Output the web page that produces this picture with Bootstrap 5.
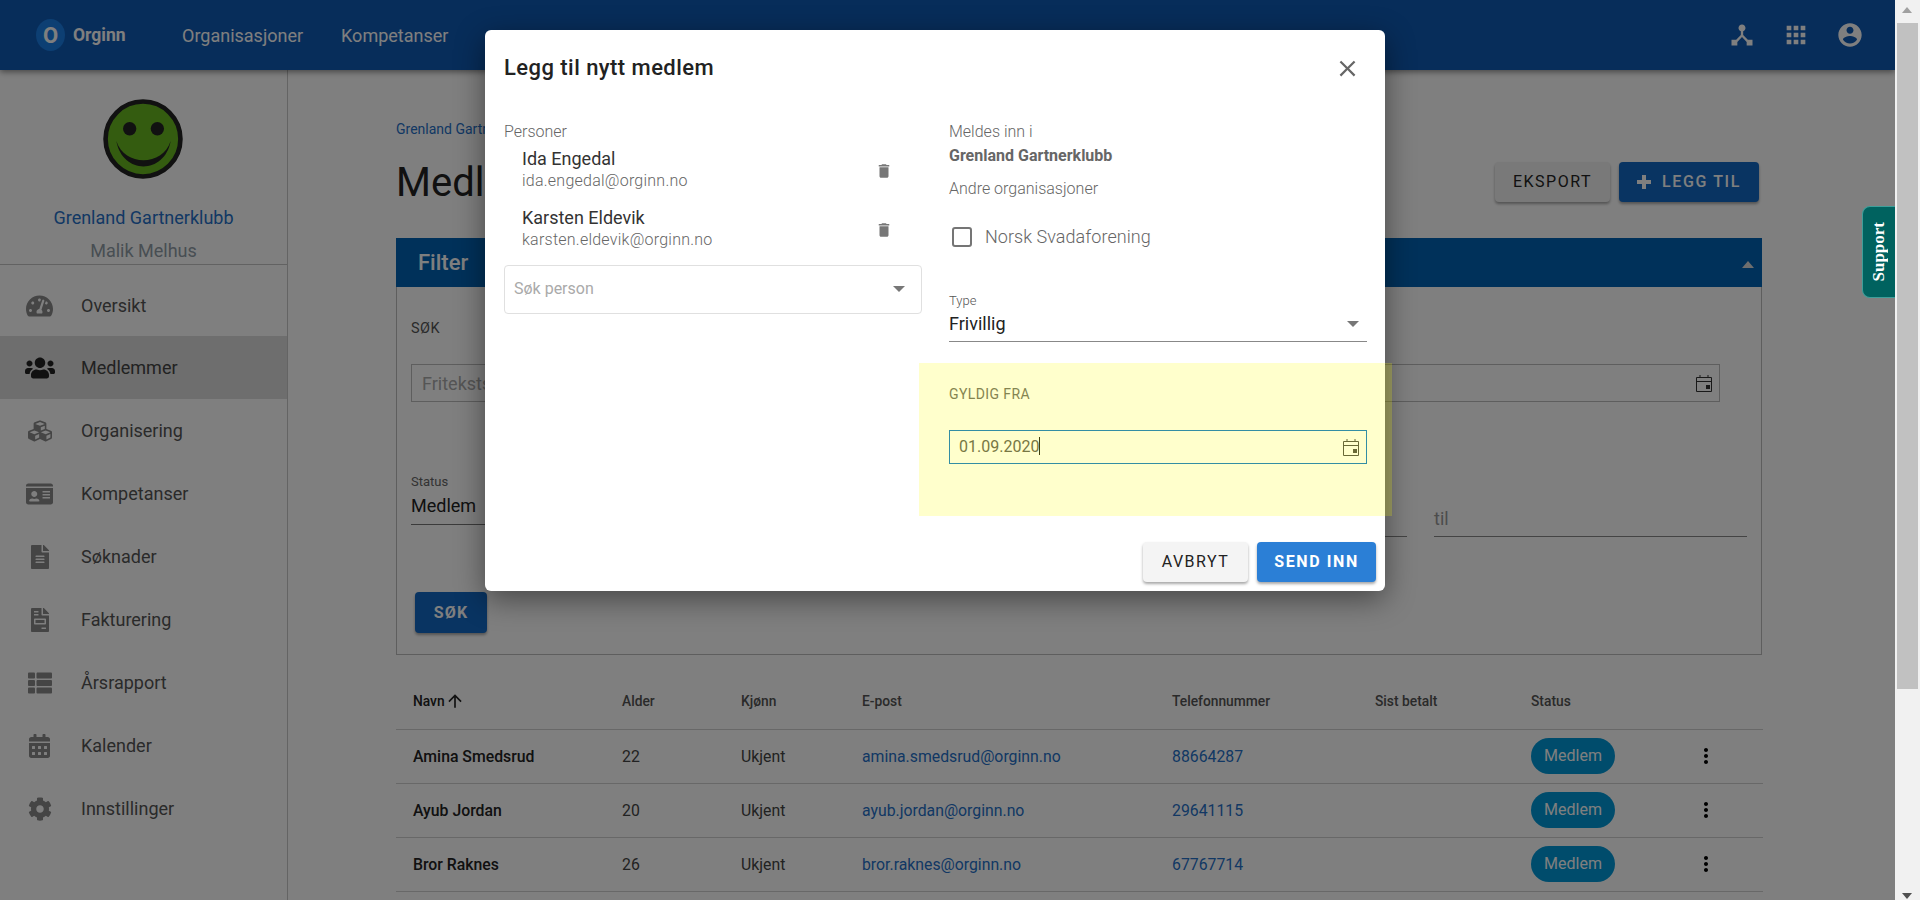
<!DOCTYPE html>
<html lang="no">
<head>
<meta charset="utf-8">
<title>Medlemmer</title>
<link href="https://cdn.jsdelivr.net/npm/bootstrap@5.3.0/dist/css/bootstrap.min.css" rel="stylesheet">
<style>
html,body{height:100%;overflow:hidden;margin:0}
body{font-family:Roboto,"Liberation Sans",sans-serif;font-size:16px;color:#212121;background:#fff}
.shell{height:900px}
.app{position:relative;width:1895px;height:900px;overflow:hidden;background:#fff}
.topbar{height:70px;background:#0f5ab4;box-shadow:0 2px 6px rgba(0,0,0,.45);padding:0 31px 0 36px;position:relative;z-index:2;flex-wrap:nowrap}
.logo-o{width:29px;height:32px;border-radius:50%;background:#1a7ee6;color:#fff;font-weight:700;font-size:22px;display:flex;align-items:center;justify-content:center}
.logo-t{font-weight:700;font-size:17.5px;color:#fff;margin-left:8px;width:109px}
.toplink{color:#fff;font-size:18px;margin-right:38px;text-decoration:none;font-weight:400}
.topicons{gap:26px}
.topicons svg{fill:#fff;width:28px;height:28px}
.side{width:288px;height:830px;border-right:1px solid #c8c8c8;background:#fff;flex:none}
.smiley{display:block;margin:29px auto 0;position:relative;left:-1px}
.side-org{display:block;text-align:center;font-size:18px;color:#2570c8;text-decoration:none;margin-top:27px;line-height:24px}
.side-usr{text-align:center;font-size:18px;color:#909ca6;line-height:24px;margin-top:9px;padding-bottom:1px;border-bottom:1px solid #c4c4c4}
.side-menu{margin-top:9px}
.side-item{height:63px;display:flex;align-items:center;color:#555;font-size:18px;text-decoration:none;background:transparent;border:0;padding:0;border-radius:0}
.side-item.active{background:#dcdcdc;color:#444}
.side-ico{width:81px;flex:none;display:flex;justify-content:center;padding-right:2px}
.side-ico svg{height:24px;width:auto;max-width:34px;fill:#8a8a8a}
.side-item.active svg{fill:#222}
.mainp{padding:49px 133px 0 108px;width:1607px;flex:none;background:#fff}
.crumb{color:#2570c8;font-size:14px;line-height:20px;text-decoration:none;display:block}
.ttl{font-size:40px;font-weight:400;line-height:48px;margin:0;color:#222}
.titlerow{margin-top:20px;height:48px}
.titlebtns{margin-top:-3px}
.mbtn{height:40px;font-size:16px;font-weight:500;letter-spacing:1.6px;border:0;border-radius:4px;box-shadow:0 2px 3px rgba(0,0,0,.35);padding:0;display:inline-flex;align-items:center;justify-content:center;text-transform:uppercase}
.b-grey{background:#f2f2f2;color:#222;width:115px;font-weight:400;letter-spacing:1.5px}
.b-blue{background:#1268c4;color:#fff;width:140px;margin-left:9px;margin-right:3px}
.plus{width:14px;height:14px;margin-right:11px;stroke:#fff;stroke-width:4;fill:none}
.filt{margin-top:31px;border-radius:0;border:0;background:transparent}
.filt-h{height:49px;background:#0062b4;color:#fff;font-size:22px;font-weight:500;padding:0 22px;border:0;border-radius:0!important}
.tri-up{width:0;height:0;border:6px solid transparent;border-top:0;border-bottom:7px solid #ddd;margin-right:-14px;margin-top:4px}
.filt-b{height:368px;border:1px solid #bcbcbc;border-top:0;padding:33px 0 0 14px;position:relative;background:transparent}
.lab-up{font-size:14.5px;line-height:18px;letter-spacing:.4px;text-transform:uppercase;color:#555}
.fld{height:38px;border:1px solid #bcbcbc;border-radius:0;margin-top:26px;margin-right:41px;display:flex;align-items:center;padding:0 7px 0 10px;color:#aaa;font-size:18px}
.cal{width:16px;height:17px;margin-left:auto;stroke:#333;fill:none;flex:none}
.cal rect.s{fill:#333;stroke:none}
.r2{margin-top:71px;height:60px;display:flex;gap:0}
.st{width:900px}
.lab-s{font-size:13px;line-height:18px;color:#666}
.val{font-size:18px;line-height:24px;margin-top:3px;color:#222;padding-bottom:6px;border-bottom:1px solid #777}
.frail{flex:1;display:flex;justify-content:flex-end;gap:27px;padding-top:34px;padding-right:14px}
.fra{height:30px;border-bottom:1px solid #888;font-size:18px;color:#999;line-height:24px}
.fra.a{width:400px}.fra.b{width:313px}
.sokb{margin-top:59px;width:72px;height:41px;margin-left:4px;background:#1268c4;color:#fff;font-size:16px;font-weight:700;letter-spacing:1.2px;display:flex}
.tbl{margin:18px 0 0;width:1367px;table-layout:fixed;color:#222;--bs-table-bg:transparent;font-size:15.8px}
.tbl th{height:56px;font-weight:500;font-size:13.8px;vertical-align:middle;padding:2px 0 0 17px;border-bottom:1px solid #d0d0d0;color:#555;white-space:nowrap}
.tbl th:first-child{color:#222}
.tbl td{height:54px;vertical-align:middle;padding:2px 0 0 17px;border-bottom:1px solid #d0d0d0;font-weight:400;color:#444;white-space:nowrap}
.tbl td:first-child{font-weight:500;color:#222}
.tbl a{color:#2570c8;text-decoration:none}
.w1{width:209px}.w2{width:119px}.w3{width:121px}.w4{width:310px}.w5{width:203px}.w6{width:156px}.w7{width:166px}.w8{width:83px}
.tbl th svg{width:20px;height:20px;fill:#222;vertical-align:-5px;margin-left:-3px}
.pill{background:#0098d8;color:#fff;border-radius:18px;width:84px;height:36px;display:flex;align-items:center;justify-content:center;font-size:16px;font-weight:400;padding:0;margin-top:-2px}
.tbl td svg{width:24px;height:24px;fill:#000;margin-left:-3px;margin-top:-3px}
.dim{position:absolute;inset:0;background:rgba(0,0,0,.5);z-index:5}
.dlg{position:absolute;left:485px;top:30px;width:900px;height:561px;z-index:6;display:block;margin:0;max-width:none}
.dlg .modal-content{height:561px;border:0;border-radius:6px;box-shadow:0 8px 30px rgba(0,0,0,.45);position:relative;background:#fff}
.dlg .modal-header{border:0;padding:2px 18px 0 19px;height:74px;align-items:center}
.dlg .modal-title{font-size:22px;font-weight:500;color:#222;line-height:30px;letter-spacing:.45px}
.x-btn{background:none;border:0;padding:0;width:24px;height:24px;margin-right:8px}
.x-btn svg{width:27px;height:27px;fill:#666;margin:-2px}
.dlg .modal-body{padding:17px 18px 0 19px;flex:none;height:438px}
.colz{gap:27px}
.colz>div{width:418px;flex:none}
.lab-g{font-size:16px;font-weight:300;color:#666;line-height:22px}
.pers{height:59px;padding:5px 0 0 18px;display:flex}
.pers-n{font-size:18px;line-height:22px;color:#333}
.pers-m{font-size:16px;font-weight:300;line-height:22px;color:#666;letter-spacing:.24px}
.pers svg{width:18px;height:18px;fill:#777;margin-left:auto;margin-right:29px;margin-top:14px}
.combo{height:49px;border:1px solid #e0e0e0;border-radius:4px;margin-top:4px;padding:0 16px 2px 9px;display:flex;align-items:center;justify-content:space-between;color:#aaa;font-size:16px}
.caret-d{width:0;height:0;border:6px solid transparent;border-bottom:0;border-top:6px solid #777}
.bold-o{font-size:16px;font-weight:700;color:#666;line-height:22px;margin-top:2px}
.andre{margin-top:11px}
.chk{margin:27px 0 0 3px;min-height:20px;padding:0;display:flex;align-items:center}
.chk .form-check-input{width:20px;height:20px;margin:0 13px 0 0;border:2px solid #757575;border-radius:3px;float:none}
.chk .form-check-label{font-size:18px;font-weight:300;color:#666;line-height:20px;letter-spacing:.05px}
.lab-t{font-size:13px;font-weight:300;line-height:18px;color:#555;margin-top:45px}
.sel{height:32px;border-bottom:1px solid #888;font-size:18px;line-height:26px;display:flex;justify-content:space-between;align-items:center;padding:0 8px 4px 0;color:#222;margin-top:0}
.lab-gy{font-size:14px;line-height:18px;letter-spacing:.4px;color:#666;margin-top:43px}
.dfld{height:34px;border:1px solid #0072ce;margin-top:27px;display:flex;align-items:center;padding:0 7px 0 9px;font-size:16px;color:#555}
.dfld .cal{stroke:#444}
.dfld .cal rect.s{fill:#444}
.cursor{display:inline-block;width:1px;height:18px;background:#111;vertical-align:-3px}
.dlg .modal-footer{border:0;padding:0 9px;gap:9px;flex-wrap:nowrap}
.dlg .modal-footer>*{margin:0}
.f-a{width:105px;background:#f4f4f4;color:#222;font-weight:400;letter-spacing:1.5px}
.f-s{width:119px;background:#2b7fd6;color:#fff;font-weight:700}
.hilite{position:absolute;left:434px;top:333px;width:473px;height:153px;background:rgba(255,255,0,.2);pointer-events:none}
.supp{position:absolute;right:0;top:206px;width:33px;height:92px;background:#00625f;border:1px solid #3e9f9a;border-right:0;border-radius:8px 0 0 8px;z-index:7;color:#fff;font:700 17px "Liberation Serif",serif;display:flex;align-items:center;justify-content:center}
.supp span{writing-mode:vertical-rl;transform:rotate(180deg)}
.sbar{width:25px;height:900px;background:#f1f1f1;flex:none;position:relative;padding:23px 2px 0}
.sthumb{height:666px;background:#c1c1c1}
.arr-u,.arr-d{position:absolute;left:7px;width:0;height:0;border:5.5px solid transparent}
.arr-u{top:7px;border-top:0;border-bottom:6px solid #a0a0a0}
.arr-d{bottom:1px;border-bottom:0;border-top:6px solid #505050}
</style>
</head>
<body>
<div class="shell d-flex">
<div class="app">
  <nav class="navbar topbar d-flex align-items-center">
    <span class="logo-o">O</span><span class="logo-t">Orginn</span>
    <a class="toplink" href="#">Organisasjoner</a>
    <a class="toplink" href="#">Kompetanser</a>
    <div class="ms-auto d-flex topicons">
      <svg viewBox="0 0 24 24"><path d="M17 16l-4-4V8.82C14.16 8.4 15 7.3 15 6c0-1.66-1.34-3-3-3S9 4.34 9 6c0 1.3.84 2.4 2 2.82V12l-4 4H3v5h5v-3.05l4-4.2 4 4.2V21h5v-5h-4z"/></svg>
      <svg viewBox="0 0 24 24"><path d="M4 8h4V4H4v4zm6 12h4v-4h-4v4zm-6 0h4v-4H4v4zm0-6h4v-4H4v4zm6 0h4v-4h-4v4zm6-10v4h4V4h-4zm-6 4h4V4h-4v4zm6 6h4v-4h-4v4zm0 6h4v-4h-4v4z"/></svg>
      <svg viewBox="0 0 24 24"><path d="M12 2C6.48 2 2 6.48 2 12s4.48 10 10 10 10-4.48 10-10S17.52 2 12 2zm0 3c1.66 0 3 1.34 3 3s-1.34 3-3 3-3-1.34-3-3 1.34-3 3-3zm0 14.2c-2.5 0-4.71-1.28-6-3.22.03-1.99 4-3.08 6-3.08 1.99 0 5.97 1.09 6 3.08-1.29 1.94-3.5 3.22-6 3.22z"/></svg>
    </div>
  </nav>
  <div class="d-flex">
    <aside class="side">
      <svg class="smiley" width="80" height="80" viewBox="0 0 78 78"><circle cx="39" cy="39" r="36.5" fill="#68b820" stroke="#222" stroke-width="4.5"/><circle cx="26" cy="29" r="6.5" fill="#222"/><circle cx="53" cy="29" r="6.5" fill="#222"/><path d="M13 41C19 74 60 74 66 41C58 66 21 66 13 41Z" fill="#222"/></svg>
      <a class="side-org" href="#">Grenland Gartnerklubb</a>
      <div class="side-usr">Malik Melhus</div>
      <div class="side-menu list-group list-group-flush">
        <a class="side-item list-group-item" href="#"><span class="side-ico"><svg viewBox="0 0 576 512"><path d="M288 32C128.94 32 0 160.94 0 320c0 52.8 14.25 102.26 39.06 144.8 5.61 9.62 16.3 15.2 27.44 15.2h443c11.14 0 21.83-5.58 27.44-15.2C561.75 422.26 576 372.8 576 320c0-159.06-128.94-288-288-288zm0 64c14.71 0 26.58 10.13 30.32 23.65-1.11 2.26-2.64 4.23-3.45 6.67l-9.22 27.67c-5.13 3.49-10.97 6.01-17.64 6.01-17.67 0-32-14.33-32-32S270.33 96 288 96zM96 384c-17.67 0-32-14.33-32-32s14.33-32 32-32 32 14.33 32 32-14.33 32-32 32zm48-160c-17.67 0-32-14.33-32-32s14.33-32 32-32 32 14.33 32 32-14.33 32-32 32zm246.77-72.41l-61.33 184C343.13 347.33 352 364.54 352 384c0 11.72-3.38 22.55-8.88 32H232.88c-5.5-9.45-8.88-20.28-8.88-32 0-33.94 26.5-61.43 59.9-63.59l61.34-184.01c4.17-12.56 17.73-19.45 30.36-15.17 12.57 4.19 19.35 17.79 15.17 30.36zm14.66 57.2l15.52-46.55c3.47-1.29 7.13-2.23 11.05-2.23 17.67 0 32 14.33 32 32s-14.33 32-32 32c-11.38-.01-20.89-6.28-26.57-15.22zM480 384c-17.67 0-32-14.33-32-32s14.33-32 32-32 32 14.33 32 32-14.33 32-32 32z"/></svg></span>Oversikt</a>
        <a class="side-item list-group-item active" href="#"><span class="side-ico"><svg viewBox="0 0 640 512"><path d="M96 224c35.3 0 64-28.7 64-64s-28.7-64-64-64-64 28.7-64 64 28.7 64 64 64zm448 0c35.3 0 64-28.7 64-64s-28.7-64-64-64-64 28.7-64 64 28.7 64 64 64zm32 32h-64c-17.6 0-33.5 7.1-45.1 18.6 40.3 22.1 68.9 62 75.1 109.4h66c17.7 0 32-14.3 32-32v-32c0-35.3-28.7-64-64-64zm-256 0c61.9 0 112-50.1 112-112S381.9 32 320 32 208 82.1 208 144s50.1 112 112 112zm76.8 32h-8.3c-20.8 10-43.9 16-68.5 16s-47.6-6-68.5-16h-8.3C179.6 288 128 339.6 128 403.2V432c0 26.5 21.5 48 48 48h288c26.5 0 48-21.5 48-48v-28.8c0-63.6-51.6-115.2-115.2-115.2zm-223.7-13.4C161.5 263.1 145.6 256 128 256H64c-35.3 0-64 28.7-64 64v32c0 17.7 14.3 32 32 32h65.9c6.3-47.4 34.9-87.3 75.2-109.4z"/></svg></span>Medlemmer</a>
        <a class="side-item list-group-item" href="#"><span class="side-ico"><svg viewBox="0 0 512 512"><path d="M488.6 250.2L392 214V105.5c0-15-9.3-28.4-23.4-33.7l-100-37.5c-8.1-3.1-17.1-3.1-25.3 0l-100 37.5c-14.1 5.3-23.4 18.7-23.4 33.7V214l-96.6 36.2C9.3 255.5 0 268.9 0 283.9V394c0 13.6 7.7 26.1 19.9 32.2l100 50c10.1 5.1 22.1 5.1 32.2 0l103.9-52 103.9 52c10.1 5.1 22.1 5.1 32.2 0l100-50c12.2-6.1 19.9-18.6 19.9-32.2V283.9c0-15-9.3-28.4-23.4-33.7zM358 214.8l-85 31.9v-68.2l85-37v73.3zM154 104.1l102-38.2 102 38.2v.6l-102 41.4-102-41.4v-.6zm84 291.1l-85 42.5v-79.1l85-38.8v75.4zm0-112l-102 41.4-102-41.4v-.6l102-38.2 102 38.2v.6zm240 112l-85 42.5v-79.1l85-38.8v75.4zm0-112l-102 41.4-102-41.4v-.6l102-38.2 102 38.2v.6z"/></svg></span>Organisering</a>
        <a class="side-item list-group-item" href="#"><span class="side-ico"><svg viewBox="0 0 576 512"><path d="M528 32H48C21.5 32 0 53.5 0 80v16h576V80c0-26.5-21.5-48-48-48zM0 432c0 26.5 21.5 48 48 48h480c26.5 0 48-21.5 48-48V128H0v304zm352-232c0-4.4 3.6-8 8-8h144c4.4 0 8 3.6 8 8v16c0 4.4-3.6 8-8 8H360c-4.4 0-8-3.6-8-8v-16zm0 64c0-4.4 3.6-8 8-8h144c4.4 0 8 3.6 8 8v16c0 4.4-3.6 8-8 8H360c-4.4 0-8-3.6-8-8v-16zm0 64c0-4.4 3.6-8 8-8h144c4.4 0 8 3.6 8 8v16c0 4.4-3.6 8-8 8H360c-4.4 0-8-3.6-8-8v-16zM176 192c35.3 0 64 28.7 64 64s-28.7 64-64 64-64-28.7-64-64 28.7-64 64-64zM67.1 396.2C75.5 370.5 99.6 352 128 352h8.2c12.3 5.1 25.7 8 39.8 8s27.6-2.9 39.8-8h8.2c28.4 0 52.5 18.5 60.9 44.2 3.2 9.9-5.2 19.8-15.6 19.8H82.7c-10.4 0-18.8-10-15.6-19.8z"/></svg></span>Kompetanser</a>
        <a class="side-item list-group-item" href="#"><span class="side-ico"><svg viewBox="0 0 384 512"><path d="M224 136V0H24C10.7 0 0 10.7 0 24v464c0 13.3 10.7 24 24 24h336c13.3 0 24-10.7 24-24V160H248c-13.2 0-24-10.8-24-24zm64 236c0 6.6-5.4 12-12 12H108c-6.6 0-12-5.4-12-12v-8c0-6.6 5.4-12 12-12h168c6.6 0 12 5.4 12 12v8zm0-64c0 6.6-5.4 12-12 12H108c-6.6 0-12-5.4-12-12v-8c0-6.6 5.4-12 12-12h168c6.6 0 12 5.4 12 12v8zm0-72v8c0 6.6-5.4 12-12 12H108c-6.6 0-12-5.4-12-12v-8c0-6.6 5.4-12 12-12h168c6.6 0 12 5.4 12 12zm96-114.1v6.1H256V0h6.1c6.4 0 12.5 2.5 17 7l97.9 98c4.5 4.5 7 10.6 7 16.9z"/></svg></span>Søknader</a>
        <a class="side-item list-group-item" href="#"><span class="side-ico"><svg viewBox="0 0 384 512"><path d="M288 256H96v64h192v-64zm89-151L279.1 7c-4.5-4.5-10.6-7-17-7H256v128h128v-6.1c0-6.3-2.5-12.4-7-16.9zm-153 31V0H24C10.7 0 0 10.7 0 24v464c0 13.3 10.7 24 24 24h336c13.3 0 24-10.7 24-24V160H248c-13.2 0-24-10.8-24-24zM64 72c0-4.42 3.58-8 8-8h80c4.42 0 8 3.58 8 8v16c0 4.42-3.58 8-8 8H72c-4.42 0-8-3.58-8-8V72zm0 64c0-4.42 3.58-8 8-8h80c4.42 0 8 3.58 8 8v16c0 4.42-3.58 8-8 8H72c-4.42 0-8-3.58-8-8v-16zm256 304c0 4.42-3.58 8-8 8h-80c-4.42 0-8-3.58-8-8v-16c0-4.42 3.58-8 8-8h80c4.42 0 8 3.58 8 8v16zm0-200v96c0 8.84-7.16 16-16 16H80c-8.84 0-16-7.16-16-16v-96c0-8.84 7.16-16 16-16h224c8.84 0 16 7.16 16 16z"/></svg></span>Fakturering</a>
        <a class="side-item list-group-item" href="#"><span class="side-ico"><svg viewBox="0 0 512 512"><path d="M149.333 216v80c0 13.255-10.745 24-24 24H24c-13.255 0-24-10.745-24-24v-80c0-13.255 10.745-24 24-24h101.333c13.255 0 24 10.745 24 24zM0 376v80c0 13.255 10.745 24 24 24h101.333c13.255 0 24-10.745 24-24v-80c0-13.255-10.745-24-24-24H24c-13.255 0-24 10.745-24 24zM125.333 32H24C10.745 32 0 42.745 0 56v80c0 13.255 10.745 24 24 24h101.333c13.255 0 24-10.745 24-24V56c0-13.255-10.745-24-24-24zm80 448H488c13.255 0 24-10.745 24-24v-80c0-13.255-10.745-24-24-24H205.333c-13.255 0-24 10.745-24 24v80c0 13.255 10.745 24 24 24zm-24-424v80c0 13.255 10.745 24 24 24H488c13.255 0 24-10.745 24-24V56c0-13.255-10.745-24-24-24H205.333c-13.255 0-24 10.745-24 24zm24 264H488c13.255 0 24-10.745 24-24v-80c0-13.255-10.745-24-24-24H205.333c-13.255 0-24 10.745-24 24v80c0 13.255 10.745 24 24 24z"/></svg></span>Årsrapport</a>
        <a class="side-item list-group-item" href="#"><span class="side-ico"><svg viewBox="0 0 448 512"><path d="M0 464c0 26.5 21.5 48 48 48h352c26.5 0 48-21.5 48-48V192H0v272zm320-196c0-6.6 5.4-12 12-12h40c6.6 0 12 5.4 12 12v40c0 6.6-5.4 12-12 12h-40c-6.6 0-12-5.4-12-12v-40zm0 128c0-6.6 5.4-12 12-12h40c6.6 0 12 5.4 12 12v40c0 6.6-5.4 12-12 12h-40c-6.6 0-12-5.4-12-12v-40zM192 268c0-6.6 5.4-12 12-12h40c6.6 0 12 5.4 12 12v40c0 6.6-5.4 12-12 12h-40c-6.6 0-12-5.4-12-12v-40zm0 128c0-6.6 5.4-12 12-12h40c6.6 0 12 5.4 12 12v40c0 6.6-5.4 12-12 12h-40c-6.6 0-12-5.4-12-12v-40zM64 268c0-6.6 5.4-12 12-12h40c6.6 0 12 5.4 12 12v40c0 6.6-5.4 12-12 12H76c-6.6 0-12-5.4-12-12v-40zm0 128c0-6.6 5.4-12 12-12h40c6.6 0 12 5.4 12 12v40c0 6.6-5.4 12-12 12H76c-6.6 0-12-5.4-12-12v-40zM400 64h-48V16c0-8.8-7.2-16-16-16h-32c-8.8 0-16 7.2-16 16v48H160V16c0-8.8-7.2-16-16-16h-32c-8.8 0-16 7.2-16 16v48H48C21.5 64 0 85.5 0 112v48h448v-48c0-26.5-21.5-48-48-48z"/></svg></span>Kalender</a>
        <a class="side-item list-group-item" href="#"><span class="side-ico"><svg viewBox="0 0 512 512"><path d="M487.4 315.7l-42.6-24.6c4.3-23.2 4.3-47 0-70.2l42.6-24.6c4.9-2.8 7.1-8.6 5.5-14-11.1-35.6-30-67.8-54.7-94.6-3.8-4.1-10-5.1-14.8-2.3L380.8 110c-17.9-15.4-38.5-27.3-60.8-35.1V25.8c0-5.6-3.9-10.5-9.4-11.7-36.7-8.2-74.3-7.8-109.2 0-5.5 1.2-9.4 6.1-9.4 11.7V75c-22.2 7.9-42.8 19.8-60.8 35.1L88.7 85.5c-4.9-2.8-11-1.9-14.8 2.3-24.7 26.7-43.6 58.9-54.7 94.6-1.7 5.4.6 11.2 5.5 14L67.3 221c-4.3 23.2-4.3 47 0 70.2l-42.6 24.6c-4.9 2.8-7.1 8.6-5.5 14 11.1 35.6 30 67.8 54.7 94.6 3.8 4.1 10 5.1 14.8 2.3l42.6-24.6c17.9 15.4 38.5 27.3 60.8 35.1v49.2c0 5.6 3.9 10.5 9.4 11.7 36.7 8.2 74.3 7.8 109.2 0 5.5-1.2 9.4-6.1 9.4-11.7v-49.2c22.2-7.9 42.8-19.8 60.8-35.1l42.6 24.6c4.9 2.8 11 1.9 14.8-2.3 24.7-26.7 43.6-58.9 54.7-94.6 1.5-5.5-.7-11.3-5.6-14.1zM256 336c-44.1 0-80-35.9-80-80s35.9-80 80-80 80 35.9 80 80-35.9 80-80 80z"/></svg></span>Innstillinger</a>
      </div>
    </aside>
    <main class="mainp">
      <a class="crumb" href="#">Grenland Gartnerklubb</a>
      <div class="titlerow d-flex justify-content-between align-items-center">
        <h1 class="ttl">Medlemmer</h1>
        <div class="d-flex titlebtns">
          <button class="btn mbtn b-grey">Eksport</button>
          <button class="btn mbtn b-blue"><svg class="plus" viewBox="0 0 14 14"><path d="M7 0V14M0 7H14"/></svg>Legg til</button>
        </div>
      </div>
      <section class="card filt">
        <div class="card-header filt-h d-flex justify-content-between align-items-center"><span>Filter</span><span class="tri-up"></span></div>
        <div class="card-body filt-b">
          <div class="lab-up">Søk</div>
          <div class="row g-0">
            <div class="col-8"><div class="fld">Fritekstsøk</div></div>
            <div class="col-4"><div class="fld"><svg class="cal" viewBox="0 0 16 17"><path d="M.5 2.5h15v14H.5zM.5 6.5h15M4 0v3M12 0v3"/><rect class="s" x="10" y="10" width="4" height="4"/></svg></div></div>
          </div>
          <div class="r2">
            <div class="st"><div class="lab-s">Status</div><div class="val">Medlem</div></div>
            <div class="frail"><div class="fra a">fra</div><div class="fra b">til</div></div>
          </div>
          <button class="btn mbtn sokb">Søk</button>
        </div>
      </section>
      <table class="table tbl">
        <thead><tr><th class="w1">Navn <svg viewBox="0 0 24 24"><path d="M4 12l1.41 1.41L11 7.83V20h2V7.83l5.58 5.59L20 12l-8-8-8 8z"/></svg></th><th class="w2">Alder</th><th class="w3">Kjønn</th><th class="w4">E-post</th><th class="w5">Telefonnummer</th><th class="w6">Sist betalt</th><th class="w7">Status</th><th class="w8"></th></tr></thead>
        <tbody>
          <tr><td>Amina Smedsrud</td><td>22</td><td>Ukjent</td><td><a href="#">amina.smedsrud@orginn.no</a></td><td><a href="#">88664287</a></td><td></td><td><span class="badge pill">Medlem</span></td><td><svg viewBox="0 0 24 24"><path d="M12 8c1.1 0 2-.9 2-2s-.9-2-2-2-2 .9-2 2 .9 2 2 2zm0 2c-1.1 0-2 .9-2 2s.9 2 2 2 2-.9 2-2-.9-2-2-2zm0 6c-1.1 0-2 .9-2 2s.9 2 2 2 2-.9 2-2-.9-2-2-2z"/></svg></td></tr>
          <tr><td>Ayub Jordan</td><td>20</td><td>Ukjent</td><td><a href="#">ayub.jordan@orginn.no</a></td><td><a href="#">29641115</a></td><td></td><td><span class="badge pill">Medlem</span></td><td><svg viewBox="0 0 24 24"><path d="M12 8c1.1 0 2-.9 2-2s-.9-2-2-2-2 .9-2 2 .9 2 2 2zm0 2c-1.1 0-2 .9-2 2s.9 2 2 2 2-.9 2-2-.9-2-2-2zm0 6c-1.1 0-2 .9-2 2s.9 2 2 2 2-.9 2-2-.9-2-2-2z"/></svg></td></tr>
          <tr><td>Bror Raknes</td><td>26</td><td>Ukjent</td><td><a href="#">bror.raknes@orginn.no</a></td><td><a href="#">67767714</a></td><td></td><td><span class="badge pill">Medlem</span></td><td><svg viewBox="0 0 24 24"><path d="M12 8c1.1 0 2-.9 2-2s-.9-2-2-2-2 .9-2 2 .9 2 2 2zm0 2c-1.1 0-2 .9-2 2s.9 2 2 2 2-.9 2-2-.9-2-2-2zm0 6c-1.1 0-2 .9-2 2s.9 2 2 2 2-.9 2-2-.9-2-2-2z"/></svg></td></tr>
        </tbody>
      </table>
    </main>
  </div>
  <div class="dim"></div>
  <div class="modal-dialog dlg">
    <div class="modal-content">
      <div class="modal-header justify-content-between">
        <h5 class="modal-title">Legg til nytt medlem</h5>
        <button class="x-btn" aria-label="Lukk"><svg viewBox="0 0 24 24"><path d="M19 6.41L17.59 5 12 10.59 6.41 5 5 6.41 10.59 12 5 17.59 6.41 19 12 13.41 17.59 19 19 17.59 13.41 12z"/></svg></button>
      </div>
      <div class="modal-body">
        <div class="d-flex colz">
          <div>
            <div class="lab-g">Personer</div>
            <div class="pers"><div><div class="pers-n">Ida Engedal</div><div class="pers-m">ida.engedal@orginn.no</div></div><svg viewBox="0 0 24 24"><path d="M6 19c0 1.1.9 2 2 2h8c1.1 0 2-.9 2-2V7H6v12zM19 4h-3.5l-1-1h-5l-1 1H5v2h14V4z"/></svg></div>
            <div class="pers"><div><div class="pers-n">Karsten Eldevik</div><div class="pers-m">karsten.eldevik@orginn.no</div></div><svg viewBox="0 0 24 24"><path d="M6 19c0 1.1.9 2 2 2h8c1.1 0 2-.9 2-2V7H6v12zM19 4h-3.5l-1-1h-5l-1 1H5v2h14V4z"/></svg></div>
            <div class="combo"><span>Søk person</span><span class="caret-d"></span></div>
          </div>
          <div>
            <div class="lab-g">Meldes inn i</div>
            <div class="bold-o">Grenland Gartnerklubb</div>
            <div class="lab-g andre">Andre organisasjoner</div>
            <div class="form-check chk"><input class="form-check-input" type="checkbox" id="c1"><label class="form-check-label" for="c1">Norsk Svadaforening</label></div>
            <div class="lab-t">Type</div>
            <div class="sel"><span>Frivillig</span><span class="caret-d"></span></div>
            <div class="lab-gy">GYLDIG FRA</div>
            <div class="dfld"><span>01.09.2020<span class="cursor"></span></span><svg class="cal" viewBox="0 0 16 17"><path d="M.5 2.5h15v14H.5zM.5 6.5h15M4 0v3M12 0v3"/><rect class="s" x="10" y="10" width="4" height="4"/></svg></div>
          </div>
        </div>
      </div>
      <div class="modal-footer">
        <button class="btn mbtn f-a">Avbryt</button>
        <button class="btn mbtn f-s">Send inn</button>
      </div>
      <div class="hilite"></div>
    </div>
  </div>
  <div class="supp"><span>Support</span></div>
</div>
<div class="sbar"><span class="arr-u"></span><div class="sthumb"></div><span class="arr-d"></span></div>
</div>
<script src="https://cdn.jsdelivr.net/npm/bootstrap@5.3.0/dist/js/bootstrap.bundle.min.js"></script>
</body>
</html>
